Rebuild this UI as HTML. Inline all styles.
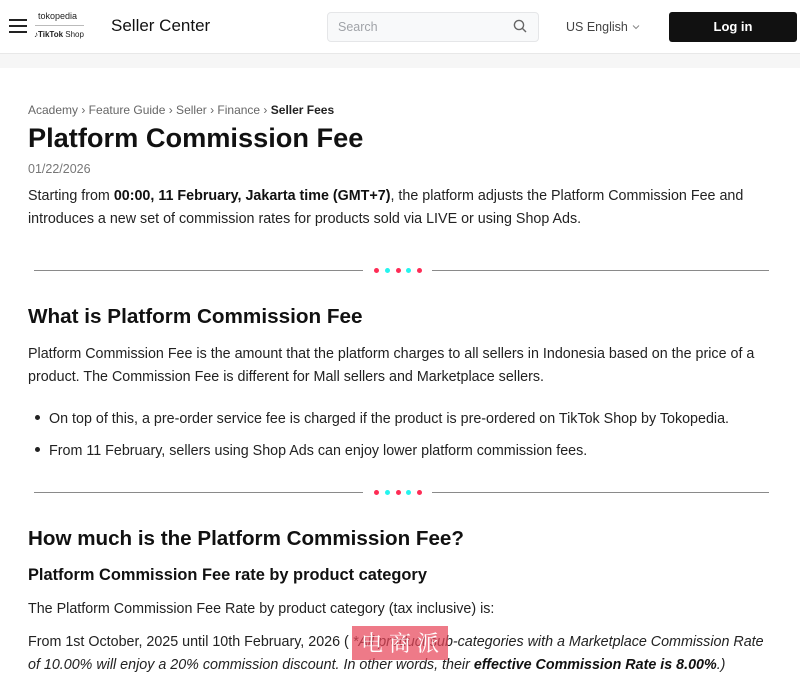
<!DOCTYPE html>
<html><head><meta charset="utf-8"><style>
*{margin:0;padding:0;box-sizing:border-box}
body{width:800px;height:677px;overflow:hidden;background:#fff;font-family:"Liberation Sans",Arial,sans-serif;color:#161823;position:relative}
.hdr{position:absolute;left:0;top:0;width:800px;height:54px;background:#fff;border-bottom:1px solid #e8e8e8}
.band{position:absolute;left:0;top:54px;width:800px;height:14px;background:#f6f6f6}
.a{position:absolute;white-space:nowrap}
p.a{font-size:14.3px;color:#222}
p.a b{color:#111}
.dv{position:absolute;height:1px;background:#8a8a8a}
.dot{position:absolute;width:5px;height:5px;border-radius:50%}
</style></head><body>
<div class="hdr"></div><div class="band"></div>
<div class="a" style="left:9px;top:19px;width:18px;height:2px;background:#222"></div>
<div class="a" style="left:9px;top:25px;width:18px;height:2px;background:#222"></div>
<div class="a" style="left:9px;top:31px;width:18px;height:2px;background:#222"></div>
<div class="a" style="left:38px;top:11px;font-size:9px;color:#222">tokopedia</div>
<div class="a" style="left:35px;top:25px;width:49px;height:1px;background:#bbb"></div>
<div class="a" style="left:34px;top:30px;font-size:8px;color:#222"><b>♪TikTok</b> Shop</div>
<div class="a" style="left:111px;top:16px;font-size:17px;color:#111">Seller Center</div>
<div class="a" style="left:327px;top:12px;width:212px;height:30px;border:1px solid #e5e6e8;border-radius:4px;background:#f8f9fa"></div>
<div class="a" style="left:338px;top:20px;font-size:12.5px;color:#a0a3a8">Search</div>
<svg class="a" style="left:513px;top:19px" width="14" height="14" viewBox="0 0 14 14"><circle cx="6" cy="6" r="4.6" fill="none" stroke="#666" stroke-width="1.4"/><path d="M9.4 9.4L13 13" stroke="#666" stroke-width="1.4"/></svg>
<div class="a" style="left:566px;top:20px;font-size:12.5px;color:#444">US English</div>
<svg class="a" style="left:632px;top:24px" width="8" height="6" viewBox="0 0 8 6"><path d="M1 1.5L4 4.5L7 1.5" fill="none" stroke="#888" stroke-width="1"/></svg>
<div class="a" style="left:669px;top:12px;width:128px;height:30px;background:#111;border-radius:3px;color:#fff;font-weight:bold;font-size:13px;text-align:center;line-height:30px">Log in</div>

<div class="a" style="left:28px;top:103px;font-size:12px;color:#666">Academy › Feature Guide › Seller › Finance › <span style="color:#222;font-weight:bold">Seller Fees</span></div>
<div class="a" style="left:28px;top:122px;font-size:27.2px;font-weight:bold;color:#111">Platform Commission Fee</div>
<div class="a" style="left:28px;top:162px;font-size:12.5px;color:#777">01/22/2026</div>
<p class="a" style="left:28px;top:188px">Starting from <b>00:00, 11 February, Jakarta time (GMT+7)</b>, the platform adjusts the Platform Commission Fee and</p>
<p class="a" style="left:28px;top:211px">introduces a new set of commission rates for products sold via LIVE or using Shop Ads.</p>

<div class="dv" style="left:34px;top:270px;width:329px"></div><div class="dv" style="left:432px;top:270px;width:337px"></div>
<div class="dot" style="left:374px;top:268px;background:#fe2c55"></div><div class="dot" style="left:385px;top:268px;background:#25f4ee"></div><div class="dot" style="left:396px;top:268px;background:#fe2c55"></div><div class="dot" style="left:406px;top:268px;background:#25f4ee"></div><div class="dot" style="left:417px;top:268px;background:#fe2c55"></div>

<div class="a" style="left:28px;top:305px;font-size:20.7px;font-weight:bold;color:#111">What is Platform Commission Fee</div>
<p class="a" style="left:28px;top:346px">Platform Commission Fee is the amount that the platform charges to all sellers in Indonesia based on the price of a</p>
<p class="a" style="left:28px;top:369px">product. The Commission Fee is different for Mall sellers and Marketplace sellers.</p>
<div class="a" style="left:35px;top:415px;width:5px;height:5px;border-radius:50%;background:#222"></div>
<p class="a" style="left:49px;top:411px">On top of this, a pre-order service fee is charged if the product is pre-ordered on TikTok Shop by Tokopedia.</p>
<div class="a" style="left:35px;top:447px;width:5px;height:5px;border-radius:50%;background:#222"></div>
<p class="a" style="left:49px;top:443px">From 11 February, sellers using Shop Ads can enjoy lower platform commission fees.</p>

<div class="dv" style="left:34px;top:492px;width:329px"></div><div class="dv" style="left:432px;top:492px;width:337px"></div>
<div class="dot" style="left:374px;top:490px;background:#fe2c55"></div><div class="dot" style="left:385px;top:490px;background:#25f4ee"></div><div class="dot" style="left:396px;top:490px;background:#fe2c55"></div><div class="dot" style="left:406px;top:490px;background:#25f4ee"></div><div class="dot" style="left:417px;top:490px;background:#fe2c55"></div>

<div class="a" style="left:28px;top:527px;font-size:20.6px;font-weight:bold;color:#111">How much is the Platform Commission Fee?</div>
<div class="a" style="left:28px;top:566px;font-size:16.4px;font-weight:bold;color:#111">Platform Commission Fee rate by product category</div>
<p class="a" style="left:28px;top:601px">The Platform Commission Fee Rate by product category (tax inclusive) is:</p>
<p class="a" style="left:28px;top:634px">From 1st October, 2025 until 10th February, 2026 ( <i>*All product sub-categories with a Marketplace Commission Rate</i></p>
<p class="a" style="left:28px;top:657px"><i>of 10.00% will enjoy a 20% commission discount. In other words, their <b>effective Commission Rate is 8.00%</b>.)</i></p>
<div class="a" style="left:352px;top:626px;width:96px;height:34px;background:rgba(232,70,90,0.72);color:#fff;font-family:'Noto Serif CJK SC','Noto Sans CJK SC',serif;font-size:22px;line-height:34px;text-align:center;letter-spacing:6px;padding-left:6px">电商派</div>
</body></html>
